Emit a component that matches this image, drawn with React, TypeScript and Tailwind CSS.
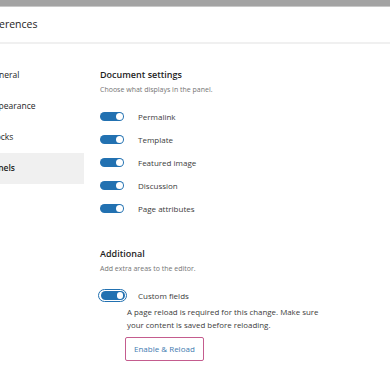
import React, { useState } from 'react';

const font = { fontFamily: '"Open Sans", "Liberation Sans", sans-serif' };

type ToggleProps = { checked: boolean; onChange: (v: boolean) => void; focused?: boolean };

const Toggle: React.FC<ToggleProps> = ({ checked, onChange, focused }) => (
  <button
    type="button"
    onClick={() => onChange(!checked)}
    className={
      focused
        ? 'flex h-[13px] w-[29px] items-center justify-center rounded-full border-[1.5px] border-[#2271b1] bg-white'
        : 'flex h-[13px] items-center'
    }
  >
    <span
      className={
        'flex h-[9px] w-[24px] items-center rounded-full px-[1.5px] ' +
        (checked ? 'justify-end bg-[#2271b1]' : 'justify-start bg-[#949494]')
      }
    >
      <span className="h-[6.5px] w-[6.5px] rounded-full bg-white" />
    </span>
  </button>
);

const navItems = ['General', 'Appearance', 'Blocks', 'Panels'];

export default function App() {
  const [doc, setDoc] = useState<Record<string, boolean>>({
    Permalink: true,
    Template: true,
    'Featured image': true,
    Discussion: true,
    'Page attributes': true,
  });
  const [custom, setCustom] = useState(true);

  return (
    <div className="h-[390px] w-[390px] overflow-hidden bg-white text-[#1e1e1e]" style={font}>
      <div className="h-[6px] bg-[#a3a3a3]" />
      <div className="h-px bg-[#c8c8c8]" />
      <div className="ml-[-28px] w-[418px]">
        <div className="flex h-[37px] items-center border-b-2 border-[#f0f0f0] pl-[7px] text-[10.5px]">
          Preferences
        </div>
        <div className="flex">
          <nav className="flex w-[112px] flex-col pt-[16px]">
            {navItems.map((item) => (
              <div
                key={item}
                className={
                  'flex h-[31px] items-center pl-[16px] text-[8.5px] ' +
                  (item === 'Panels' ? 'bg-[#f0f0f0] font-semibold' : '')
                }
              >
                {item}
              </div>
            ))}
          </nav>
          <main className="flex-1 pl-[16px] pt-[24px]">
            <h2 className="text-[9px] leading-[13px] font-semibold">Document settings</h2>
            <p className="mt-[4px] text-[7px] leading-[10px] text-[#757575]">
              Choose what displays in the panel.
            </p>
            <div className="mt-[10px] flex flex-col">
              {Object.keys(doc).map((k) => (
                <label key={k} className="flex h-[23px] items-center">
                  <Toggle checked={doc[k]} onChange={(v) => setDoc({ ...doc, [k]: v })} />
                  <span className="ml-[14px] text-[8px] text-[#3c3c3c]">{k}</span>
                </label>
              ))}
            </div>
            <h2 className="mt-[27px] text-[9px] leading-[13px] font-semibold">Additional</h2>
            <p className="mt-[4px] text-[7px] leading-[10px] text-[#757575]">
              Add extra areas to the editor.
            </p>
            <div className="mt-[13px] flex h-[17px] items-center">
              <div className="-ml-[2px]">
                <Toggle checked={custom} onChange={setCustom} focused />
              </div>
              <span className="ml-[11px] text-[8px] text-[#3c3c3c]">Custom fields</span>
            </div>
            <div className="pl-[25px]">
              <p className="mt-[2px] w-[205px] pl-[2px] text-[7.9px] leading-[13px] text-[#3c3c3c]">
                A page reload is required for this change. Make sure your content is saved before
                reloading.
              </p>
              <button
                type="button"
                className="mt-[5px] h-[24px] rounded-[2px] border-[1.5px] border-[#c45c8e] px-[8px] text-[8px] text-[#3f7bb0]"
              >
                Enable &amp; Reload
              </button>
            </div>
          </main>
        </div>
      </div>
    </div>
  );
}
